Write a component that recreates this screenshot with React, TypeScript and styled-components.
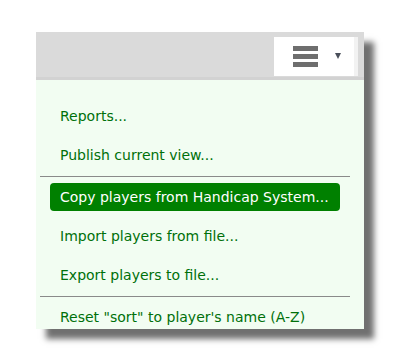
import { createGlobalStyle } from "styled-components";
import styled from "styled-components";

const GlobalStyle = createGlobalStyle`
	html, body {
		margin: 0;
		padding: 0;
		background: #ffffff;
	}
	body {
		font-family: "DejaVu Sans", Verdana, sans-serif;
	}
`;

const Page = styled.div`
	padding: 32px 0 0 36px;
	height: 362px;
	box-sizing: border-box;
	overflow: hidden;
`;

const Panel = styled.div`
	width: 328px;
	box-shadow: 10px 10px 6px #707070;
	background: #f2fdf2;
`;

const Toolbar = styled.div`
	display: flex;
	justify-content: flex-end;
	height: 48px;
	box-sizing: border-box;
	padding: 5px 6px 1px 0;
	background: #dadada;
	border-bottom: 3px solid #d2d2d2;
`;

const MenuButton = styled.button`
	display: flex;
	align-items: center;
	width: 84px;
	height: 39px;
	padding: 0 0 0 19px;
	margin: 0;
	border: none;
	border-right: 4px solid #f2f2f2;
	background: #ffffff;
	box-sizing: border-box;
	cursor: pointer;
`;

const Bars = styled.span`
	display: flex;
	flex-direction: column;
	gap: 3px;
	span {
		display: block;
		width: 25px;
		height: 5px;
		background: #6e6e6e;
	}
`;

const Caret = styled.span`
	margin: -2px 0 0 17px;
	width: 0;
	height: 0;
	border-left: 3px solid transparent;
	border-right: 3px solid transparent;
	border-top: 6px solid #4a4f5a;
`;

const Menu = styled.div`
	display: flex;
	flex-direction: column;
	height: 249px;
	overflow: hidden;
	padding: 17px 24px 0 14px;
	box-sizing: border-box;
`;

const Item = styled.div<{ active?: boolean }>`
	flex: none;
	height: 28px;
	line-height: 29px;
	margin: 5px 0 6px;
	padding: 0 10px;
	border-radius: 4px;
	font-size: 14px;
	white-space: nowrap;
	color: ${(p) => (p.active ? "#ffffff" : "#00700a")};
	background: ${(p) => (p.active ? "#008000" : "transparent")};
`;

const Separator = styled.div`
	flex: none;
	height: 1px;
	margin: 1px -10px;
	background: #8a8a8a;
`;

function App() {
	return (
		<Page>
			<GlobalStyle />
			<Panel>
				<Toolbar>
					<MenuButton>
						<Bars>
							<span />
							<span />
							<span />
						</Bars>
						<Caret />
					</MenuButton>
				</Toolbar>
				<Menu>
					<Item>Reports...</Item>
					<Item>Publish current view...</Item>
					<Separator />
					<Item active>Copy players from Handicap System...</Item>
					<Item>Import players from file...</Item>
					<Item>Export players to file...</Item>
					<Separator />
					<Item>Reset "sort" to player's name (A-Z)</Item>
				</Menu>
			</Panel>
		</Page>
	);
}

export default App;
